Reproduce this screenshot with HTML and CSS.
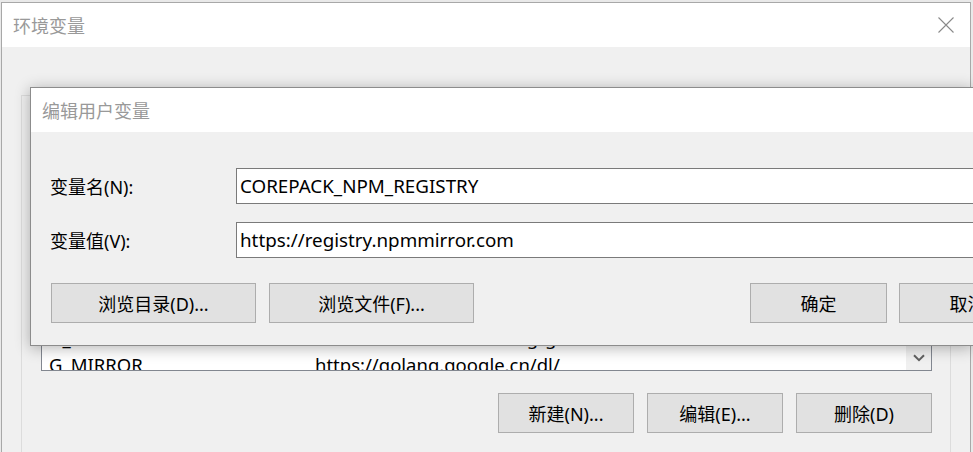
FILE: index.html
```html
<!DOCTYPE html>
<html>
<head>
  <meta charset="UTF-8">
  <meta name="viewport" content="width=device-width, initial-scale=1.0">
  <title>环境变量</title>
  <link rel="stylesheet" href="styles.css">
</head>
<body>
  <main class="desktop">
    <section class="window env">
      <header class="titlebar">
        <span class="title">环境变量</span>
        <span class="close">
          <svg width="16" height="16" viewBox="0 0 16 16">
            <path d="M0.5 0.5 L15.5 15.5 M15.5 0.5 L0.5 15.5" stroke="#8a8a8a" stroke-width="1.1" fill="none"/>
          </svg>
        </span>
      </header>

      <div class="env-body">
        <div class="group">
          <div class="list">
            <div class="list-rows">
              <div class="row"><span class="name">G_HOME</span><span class="value">C:\Users\Administrator\.g\go</span></div>
              <div class="row"><span class="name">G_MIRROR</span><span class="value">https://golang.google.cn/dl/</span></div>
            </div>
            <div class="scrollbar">
              <span class="scroll-arrow">
                <svg width="12" height="8" viewBox="0 0 12 8">
                  <path d="M1 1.2 L6 6.2 L11 1.2" stroke="#606060" stroke-width="2" fill="none"/>
                </svg>
              </span>
            </div>
          </div>

          <div class="list-actions">
            <button class="btn btn-small">新建(N)...</button>
            <button class="btn btn-small">编辑(E)...</button>
            <button class="btn btn-small">删除(D)</button>
          </div>
        </div>
      </div>
    </section>

    <section class="window dialog">
      <header class="titlebar dialog-titlebar">
        <span class="title">编辑用户变量</span>
      </header>

      <div class="dialog-body">
        <div class="field">
          <label class="field-label" for="var-name">变量名(N):</label>
          <input class="field-input" id="var-name" type="text" value="COREPACK_NPM_REGISTRY">
        </div>

        <div class="field">
          <label class="field-label" for="var-value">变量值(V):</label>
          <input class="field-input" id="var-value" type="text" value="https://registry.npmmirror.com">
        </div>

        <div class="dialog-actions">
          <button class="btn btn-wide">浏览目录(D)...</button>
          <button class="btn btn-wide">浏览文件(F)...</button>
          <span class="spacer"></span>
          <button class="btn btn-small">确定</button>
          <button class="btn btn-small">取消</button>
        </div>
      </div>
    </section>
  </main>
</body>
</html>
```

FILE: styles.css
```css
* {
  box-sizing: border-box;
}

body {
  margin: 0;
  width: 973px;
  height: 452px;
  overflow: hidden;
  background-color: #e9e9e9;
  font-family: "Noto Sans", "Noto Sans CJK SC", sans-serif;
  font-size: 18px;
  color: #000;
}

.desktop {
  position: relative;
  width: 100%;
  height: 100%;
  overflow: hidden;
}

/* windows on the desktop */
.window {
  position: absolute;
  border: 1px solid #a8a8a8;
  background-color: #f0f0f0;
  display: flex;
  flex-direction: column;
  overflow: hidden;
}

.env {
  left: 1px;
  top: 2px;
  width: 970px;
  height: 450px;
  border-bottom: none;
}

.dialog {
  left: 30px;
  top: 87px;
  width: 943px;
  height: 259px;
  border-right: none;
  border-color: #8c8c8c;
  box-shadow: 0 2px 14px rgba(0, 0, 0, 0.3);
  z-index: 2;
}

.titlebar {
  display: flex;
  align-items: center;
  justify-content: space-between;
  height: 44px;
  flex-shrink: 0;
  padding: 0 16px 0 11px;
  background-color: #fff;
}

.title {
  color: #999;
  font-size: 18px;
}

.close {
  display: flex;
}

/* environment window */
.env-body {
  padding: 48px 19px 0;
}

.group {
  border: 1px solid #dcdcdc;
  border-bottom: none;
  padding: 29px 18px 0 19px;
  height: 400px;
}

.list {
  display: flex;
  height: 246px;
  border: 1px solid #828790;
  background-color: #fff;
  overflow: hidden;
}

.list-rows {
  flex: 1;
  display: flex;
  flex-direction: column;
  justify-content: flex-end;
  margin-bottom: -8px;
}

.row {
  display: flex;
  height: 27px;
  line-height: 27px;
  padding-left: 7px;
  white-space: nowrap;
  font-size: 18.5px;
}

.name {
  width: 266px;
}

.scrollbar {
  width: 25px;
  display: flex;
  flex-direction: column;
  justify-content: flex-end;
  background-color: #f0f0f0;
}

.scroll-arrow {
  display: flex;
  align-items: center;
  justify-content: center;
  height: 24px;
}

.list-actions {
  display: flex;
  justify-content: flex-end;
  gap: 13px;
  margin-top: 22px;
}

/* buttons */
.btn {
  flex-shrink: 0;
  height: 40px;
  border: 1px solid #adadad;
  background-color: #e1e1e1;
  font-family: inherit;
  font-size: 18px;
  color: #000;
  padding: 0;
  white-space: nowrap;
}

.btn-small {
  width: 136px;
}

.btn-wide {
  width: 205px;
}

/* edit dialog */
.dialog-body {
  display: flex;
  flex-direction: column;
  gap: 18px;
  width: 1025px;
  padding: 36px 20px 22px 20px;
}

.field {
  display: flex;
  align-items: center;
}

.field-label {
  width: 186px;
  margin-left: -1px;
  padding-right: 1px;
}

.field-input {
  flex: 1;
  height: 36px;
  border: 1px solid #7a7a7a;
  padding: 0 3px;
  font-family: inherit;
  font-size: 18.8px;
  color: #000;
  outline: none;
}

.dialog-actions {
  display: flex;
  gap: 13px;
  margin-top: 7px;
}

.dialog-actions .btn-small {
  width: 137px;
}

.dialog-actions .btn-small + .btn-small {
  margin-left: -1px;
}

.spacer {
  flex: 1;
}
```
